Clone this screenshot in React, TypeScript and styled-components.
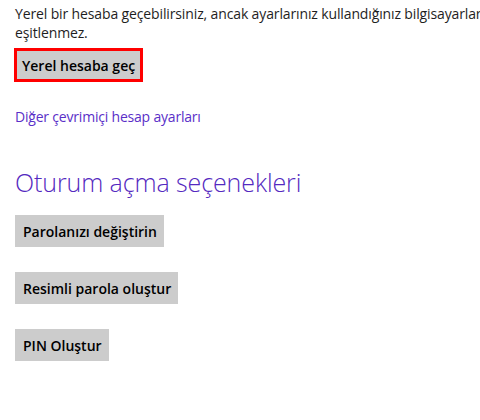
import React from "react";
import styled, { createGlobalStyle } from "styled-components";

const GlobalStyle = createGlobalStyle`
  html, body {
    margin: 0;
    padding: 0;
    background: #ffffff;
    overflow: hidden;
  }
  body {
    font-family: "Open Sans", "Noto Sans", "Liberation Sans", sans-serif;
  }
`;

const Page = styled.div`
  width: 480px;
  height: 420px;
  overflow: hidden;
  box-sizing: border-box;
  padding: 4px 0 0 15px;
  display: flex;
  flex-direction: column;
  align-items: flex-start;
`;

const Description = styled.p`
  margin: 0;
  font-size: 14px;
  line-height: 19px;
  letter-spacing: -0.13px;
  color: #1e1e1e;
  white-space: nowrap;
`;

const Button = styled.button<{ $focused?: boolean }>`
  font-family: inherit;
  font-size: 14px;
  font-weight: 600;
  color: #000000;
  background: #cccccc;
  border: ${(p) => (p.$focused ? "3px solid #ff0000" : "none")};
  margin: ${(p) => (p.$focused ? "0 0 0 -1px" : "0")};
  height: ${(p) => (p.$focused ? "34px" : "32px")};
  padding: ${(p) => (p.$focused ? "0 5px" : "0 7px 0 8px")};
  display: flex;
  align-items: center;
  cursor: pointer;
  white-space: nowrap;
`;

const FocusWrap = styled.div`
  margin-top: 6px;
`;

const Link = styled.a`
  margin-top: 26px;
  font-size: 14px;
  line-height: 18px;
  letter-spacing: -0.2px;
  color: #5a2fc8;
  text-decoration: none;
  cursor: pointer;
`;

const Heading = styled.h2`
  margin: 40px 0 0 0;
  font-size: 25px;
  line-height: 32px;
  font-weight: 300;
  letter-spacing: -0.1px;
  color: #5429c0;
`;

const ButtonList = styled.div`
  margin-top: 17px;
  display: flex;
  flex-direction: column;
  align-items: flex-start;
  gap: 25px;
`;

export default function App() {
  return (
    <>
      <GlobalStyle />
      <Page>
        <Description>
          Yerel bir hesaba geçebilirsiniz, ancak ayarlarınız kullandığınız bilgisayarlar
          <br />
          eşitlenmez.
        </Description>
        <FocusWrap>
          <Button $focused>Yerel hesaba geç</Button>
        </FocusWrap>
        <Link>Diğer çevrimiçi hesap ayarları</Link>
        <Heading>Oturum açma seçenekleri</Heading>
        <ButtonList>
          <Button>Parolanızı değiştirin</Button>
          <Button>Resimli parola oluştur</Button>
          <Button>PIN Oluştur</Button>
        </ButtonList>
      </Page>
    </>
  );
}
